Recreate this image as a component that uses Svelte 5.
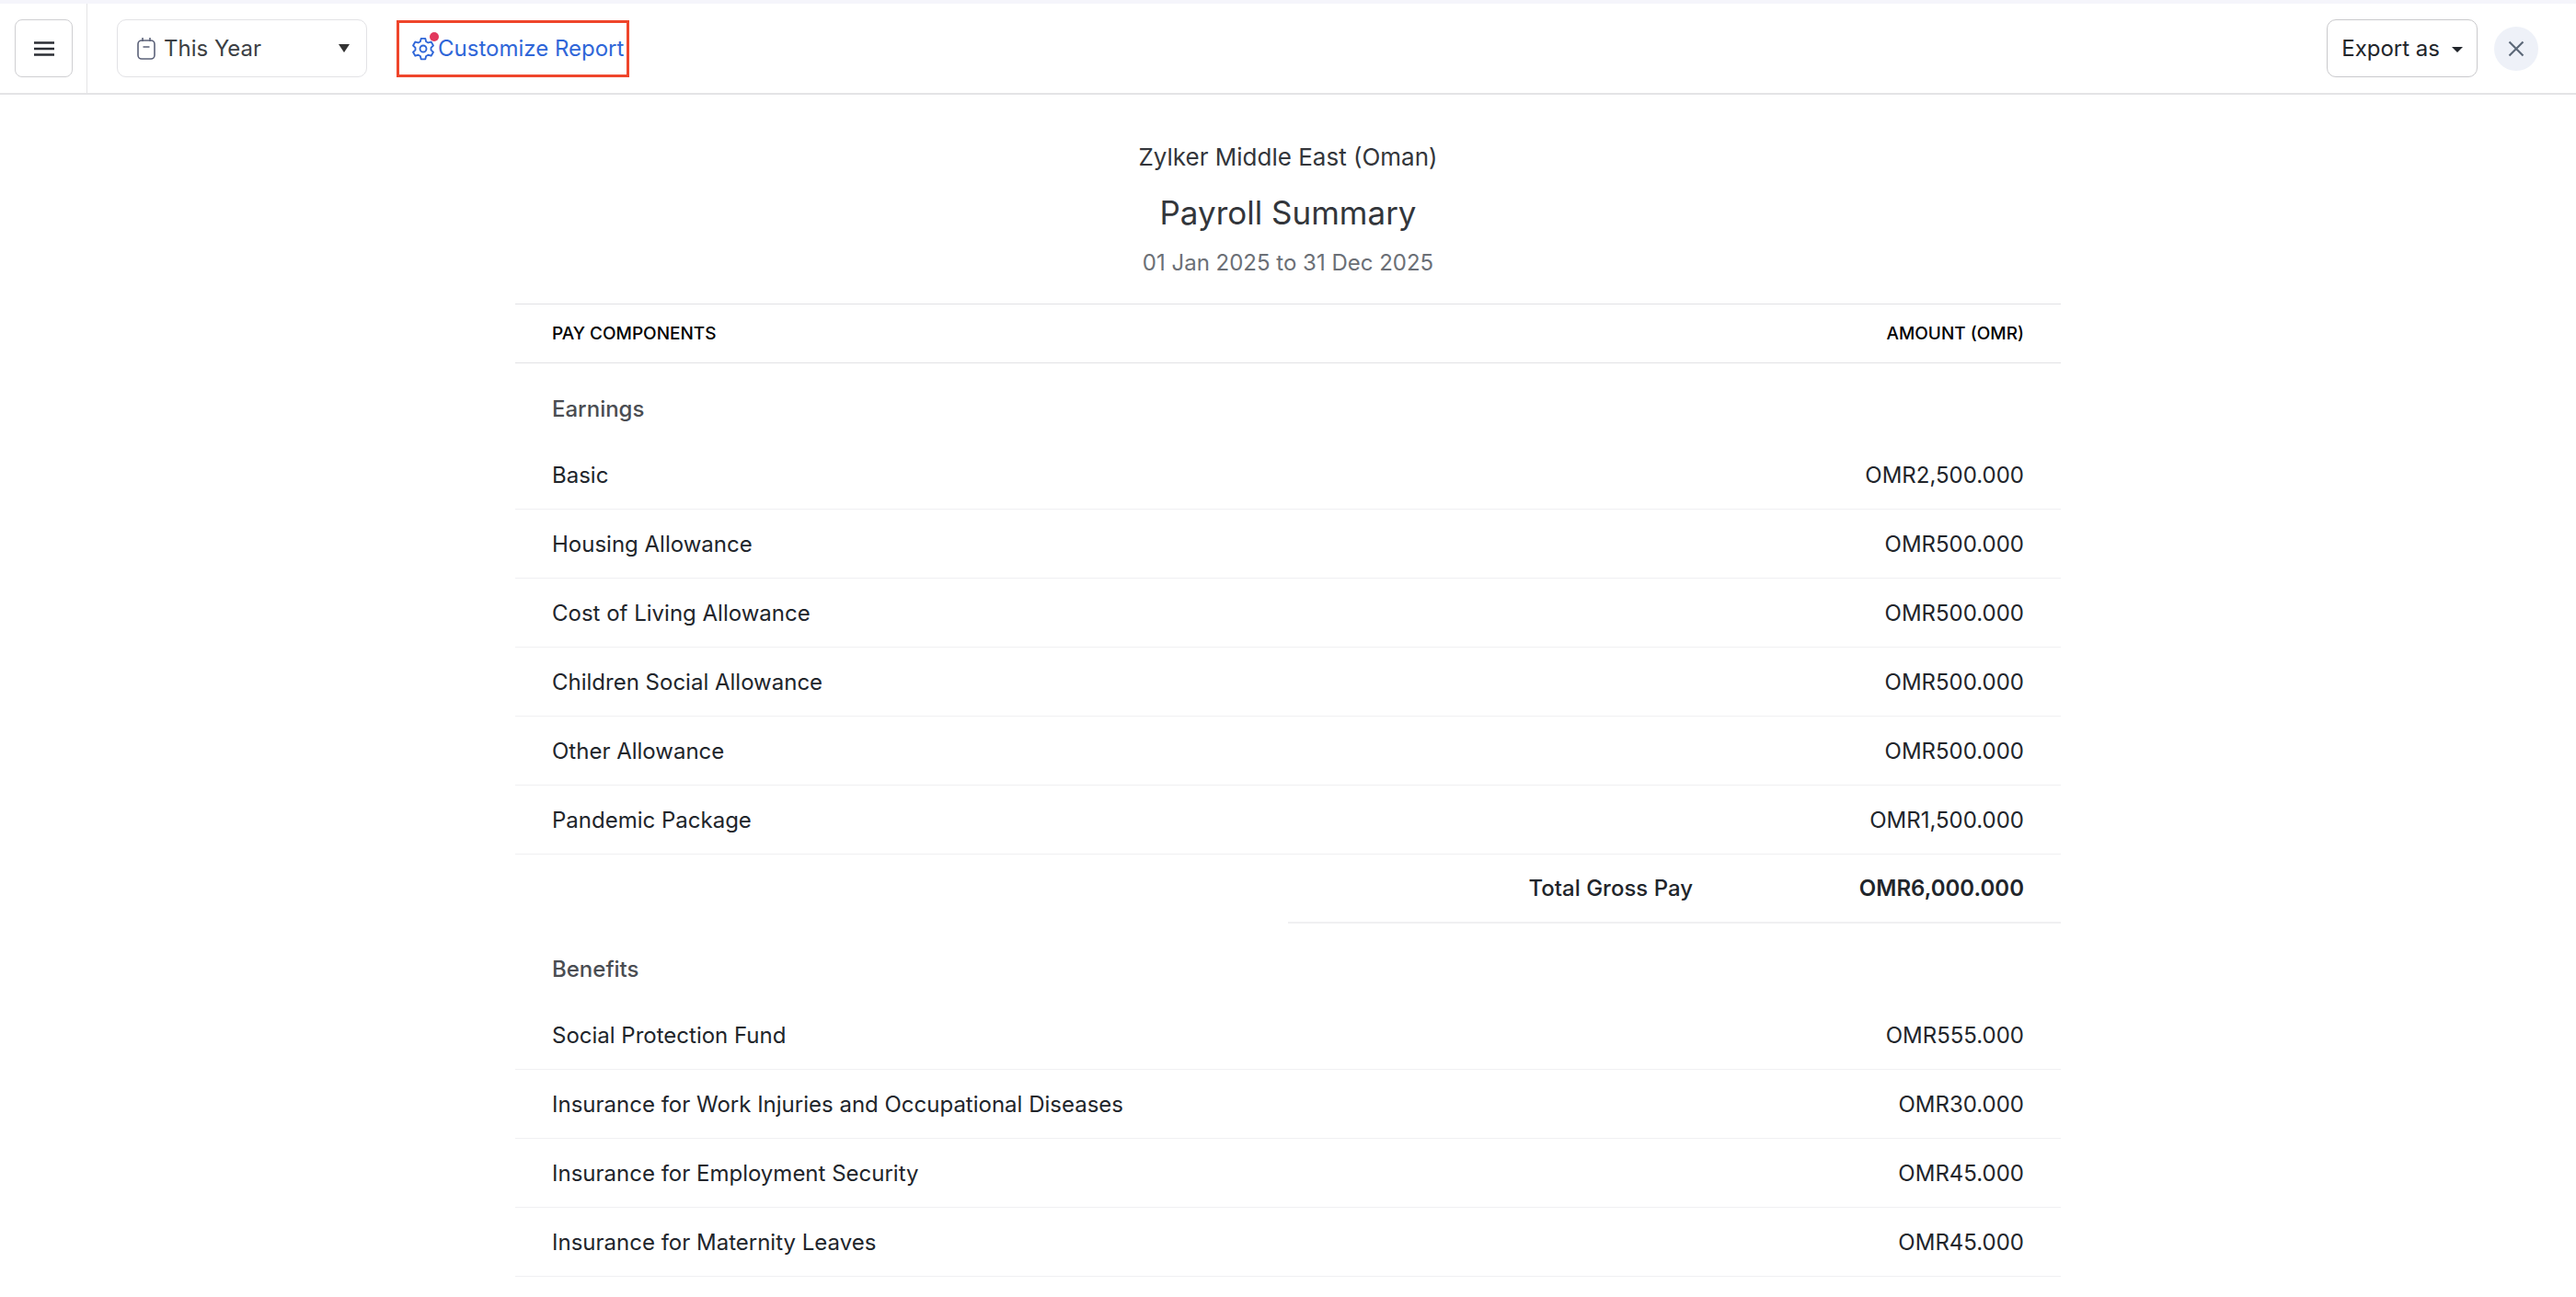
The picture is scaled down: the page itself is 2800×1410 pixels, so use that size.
<script>
  const earnings = [
    ['Basic', 'OMR2,500.000'],
    ['Housing Allowance', 'OMR500.000'],
    ['Cost of Living Allowance', 'OMR500.000'],
    ['Children Social Allowance', 'OMR500.000'],
    ['Other Allowance', 'OMR500.000'],
    ['Pandemic Package', 'OMR1,500.000']
  ];
  const benefits = [
    ['Social Protection Fund', 'OMR555.000'],
    ['Insurance for Work Injuries and Occupational Diseases', 'OMR30.000'],
    ['Insurance for Employment Security', 'OMR45.000'],
    ['Insurance for Maternity Leaves', 'OMR45.000']
  ];
</script>

<div class="page">
  <header class="bar">
    <div class="menu-cell">
      <button class="menu" aria-label="menu">
        <svg width="24" height="18" viewBox="0 0 24 18"><path d="M1 2.5h22M1 9h22M1 15.500h22" stroke="#2b2e34" stroke-width="2.600" fill="none"/></svg>
      </button>
    </div>
    <button class="range">
      <svg class="cal" width="20" height="26" viewBox="0 0 20 26" fill="none" stroke="#5b6178" stroke-width="1.600"><rect x="1" y="4" width="18" height="20" rx="4"/><path d="M6 1v4M14 1v4M6.500 11h7"/></svg>
      <span>This Year</span>
      <i class="tri"></i>
    </button>
    <div class="customize">
      <span class="gear">
        <svg width="28" height="28" viewBox="0 0 24 24" fill="none" stroke="#2f66d8" stroke-width="1.600" stroke-linejoin="round"><path d="M10 2.500h4l.7 2.800 1.900 1.100 2.800-.8 2 3.400-2.100 2 0 2.200 2.100 2-2 3.400-2.800-.8-1.900 1.100-.7 2.800h-4l-.7-2.800-1.900-1.100-2.800.8-2-3.400 2.100-2 0-2.200-2.100-2 2-3.400 2.800.8 1.900-1.100z"/><circle cx="12" cy="12" r="3"/></svg>
        <i class="dot"></i>
      </span>
      <span>Customize Report</span>
    </div>
    <div class="right">
      <button class="export">Export as <i class="tri small"></i></button>
      <button class="close" aria-label="close">
        <svg width="18" height="18" viewBox="0 0 18 18"><path d="M1.500 1.500l15 15M16.500 1.500l-15 15" stroke="#5c6878" stroke-width="2.200"/></svg>
      </button>
    </div>
  </header>

  <section class="titles">
    <div class="org">Zylker Middle East (Oman)</div>
    <h1>Payroll Summary</h1>
    <div class="dates">01 Jan 2025 to 31 Dec 2025</div>
  </section>

  <main class="table">
    <div class="head"><span>PAY COMPONENTS</span><span>AMOUNT (OMR)</span></div>
    <div class="group">Earnings</div>
    {#each earnings as [n, v]}
      <div class="row"><span>{n}</span><span>{v}</span></div>
    {/each}
    <div class="total"><span class="tl">Total Gross Pay</span><span class="tv">OMR6,000.000</span></div>
    <div class="group second">Benefits</div>
    {#each benefits as [n, v]}
      <div class="row"><span>{n}</span><span>{v}</span></div>
    {/each}
  </main>
</div>

<style>
  :global(body) { margin: 0; background: #fff; }
  .page { height: 1410px; overflow: hidden; font-family: Inter, "Liberation Sans", sans-serif; color: #21252b; border-top: 4px solid #f5f5fb; box-sizing: border-box; font-size: 24px; }
  button { font: inherit; color: inherit; background: #fff; cursor: pointer; margin: 0; }
  .bar { height: 97px; border-bottom: 2px solid #e4e4e6; display: flex; align-items: center; box-sizing: content-box; }
  .menu-cell { width: 95px; height: 97px; border-right: 1px solid #e4e4e6; display: flex; align-items: center; padding-left: 16px; box-sizing: border-box; flex: none; }
  .menu { width: 63px; height: 63px; border: 1px solid #cfcfd2; border-radius: 8px; display: flex; align-items: center; justify-content: center; padding: 0; }
  .range { margin-left: 32px; width: 272px; height: 63px; border: 1px solid #e2e2e5; border-radius: 10px; display: flex; align-items: center; padding: 0 18px 0 21px; box-sizing: border-box; color: #3c3f44; }
  .cal { margin-right: 9px; }
  .range span { flex: 1; text-align: left; }
  .tri { width: 0; height: 0; border-left: 6px solid transparent; border-right: 6px solid transparent; border-top: 9px solid #333; display: inline-block; }
  .tri.small { border-left-width: 6px; border-right-width: 6px; border-top-width: 6px; border-top-color: #21252b; margin-left: 6px; vertical-align: middle; }
  .customize { margin-left: 32px; width: 253px; height: 62px; box-sizing: border-box; border: 3px solid #ef452b; display: flex; align-items: center; padding-left: 12px; color: #2f66d8; }
  .gear { position: relative; display: flex; margin-right: 2px; }
  .dot { position: absolute; right: -3px; top: -4px; width: 10px; height: 10px; border-radius: 50%; background: #e2385c; }
  .right { margin-left: auto; display: flex; align-items: center; }
  .export { width: 164px; height: 63px; border: 1px solid #c9c9cc; border-radius: 10px; padding: 0; }
  .close { width: 48px; height: 48px; border: none; border-radius: 50%; background: #eef1f8; margin: 0 41px 0 18px; display: flex; align-items: center; justify-content: center; padding: 0; }
  .titles { text-align: center; }
  .org { margin-top: 50px; line-height: 36px; font-size: 26px; color: #33363b; }
  h1 { margin: 20px 0 0; font-weight: 400; font-size: 35px; line-height: 44px; color: #33363b; }
  .dates { margin-top: 17px; line-height: 32px; color: #6b6f76; }
  .table { width: 1680px; margin: 28px auto 0; }
  .head { height: 65px; border-top: 1px solid #e2e2e5; border-bottom: 1px solid #e2e2e5; display: flex; justify-content: space-between; align-items: center; padding: 0 40px; box-sizing: border-box; font-size: 19px; font-weight: 500; color: #000; }
  .group { height: 75px; padding: 0 40px; display: flex; align-items: center; color: #4a4d52; font-weight: 500; margin-top: 14px; box-sizing: border-box; height: 70px; }
  .row { height: 75px; box-sizing: border-box; border-bottom: 1px solid #f0f0f2; display: flex; align-items: center; justify-content: space-between; padding: 0 40px; }
  .total { height: 75px; margin-left: 840px; box-sizing: border-box; border-bottom: 2px solid #f0f0f2; display: flex; align-items: center; padding: 0 40px 0 0; font-weight: 500; }
  .tl { margin-left: auto; }
  .tv { width: 360px; text-align: right; font-weight: 600; }
</style>
